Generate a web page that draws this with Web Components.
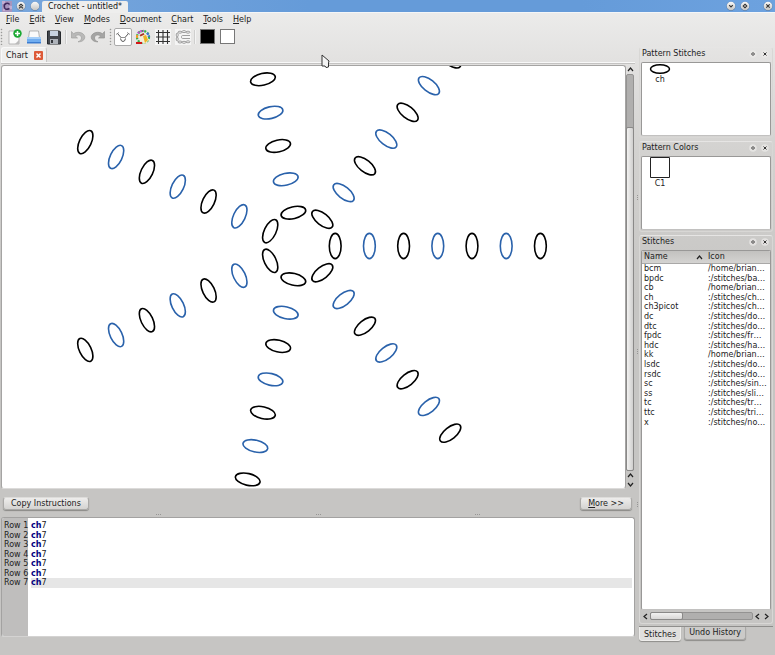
<!DOCTYPE html>
<html lang="en">
<head>
<meta charset="utf-8">
<title>Crochet - untitled*</title>
<style>
html,body{height:100%;margin:0}
body{font:8px/10px "DejaVu Sans","Liberation Sans",sans-serif;color:#222;overflow:hidden}
</style>
</head>
<body>
<crochet-app></crochet-app>
<script>
const BASE = `*{box-sizing:border-box}
button{font:inherit;color:inherit;background:none;border:0;padding:0;margin:0;display:block;white-space:nowrap}
svg{display:block}`;

class Base extends HTMLElement {
  connectedCallback() {
    if (this.shadowRoot) return;
    this.attachShadow({mode: 'open'}).innerHTML = `<style>${BASE}${this.css()}</style>${this.html()}`;
  }
  css() { return ''; }
  html() { return ''; }
}

/* Round window button with a small glyph */
customElements.define('round-button', class extends Base {
  css() { return `:host{display:block}
    button{width:10px;height:10px}`; }
  html() {
    const glyphs = {
      shade: '<path d="M3 5l2-1.800 2 1.800M3 7.400l2-1.800 2 1.800"/>',
      blank: '',
      min: '<path d="M3.200 4.200L5 6l1.800-1.800"/>',
      max: '<path d="M5 3.200L6.800 5 5 6.800 3.200 5z"/>',
      close: '<path d="M3.300 3.300l3.400 3.400M6.700 3.300L3.300 6.700"/>'
    };
    return `<button type="button" aria-label="${this.getAttribute('label')}">
      <svg width="10" height="10" viewBox="0 0 10 10"><defs><linearGradient id="g" x2="0" y2="1"><stop stop-color="#fafafa"/><stop offset="1" stop-color="#c4c3c1"/></linearGradient></defs>
      <circle cx="5" cy="5.300" r="4.600" fill="#3a5a80" opacity=".55"/><circle cx="5" cy="5" r="4.300" fill="url(#g)"/>
      <g fill="none" stroke="#333" stroke-width="1.100">${glyphs[this.getAttribute('glyph')]}</g></svg></button>`;
  }
});

customElements.define('title-bar', class extends Base {
  css() { return `:host{display:flex;height:13px;background:linear-gradient(90deg,#79a7dc,#659bd9 40%,#659bd9 75%,#6da2df);border-bottom:1px solid #f4f6f8;align-items:center;gap:4px;padding:0 2px}
    .name{align-self:flex-end;height:12px;margin:0 0 -1px -2px;background:#eeeeed;border-radius:2px 2px 0 0;padding:1px 6px 0;color:#111}
    .fill{flex:1}.gap{width:5px}`; }
  html() { return `<svg width="10" height="11" viewBox="0 0 10 11"><rect width="10" height="11" fill="#a795be"/><path d="M0 0h3v3H0zM7 5h3v3H7zM1 8h2v2H1z" fill="#c3aed2"/><path d="M7.500 3.500Q6.500 1.500 4 2.500T2.500 6.500Q3 9.500 7.500 7.500" fill="none" stroke="#40285c" stroke-width="1.500"/></svg>
    <round-button glyph="shade" label="Shade"></round-button><round-button glyph="blank" label="On all desktops"></round-button>
    <div class="name">Crochet - untitled*</div><span class="fill"></span>
    <round-button glyph="min" label="Minimize"></round-button><round-button glyph="max" label="Maximize"></round-button><span class="gap"></span><round-button glyph="close" label="Close"></round-button>`; }
});

customElements.define('menu-bar', class extends Base {
  css() { return `:host{display:block}nav{display:flex;gap:10px;padding:2px 6px;height:14px}u{text-underline-offset:1px}`; }
  html() {
    return `<nav aria-label="Main menu">${['File','Edit','View','Modes','Document','Chart','Tools','Help']
      .map(m => `<button type="button"><u>${m[0]}</u>${m.slice(1)}</button>`).join('')}</nav>`;
  }
});

customElements.define('tool-bar', class extends Base {
  css() { return `:host{display:flex;align-items:center;height:19px;gap:2px}
    button{width:18px;height:18px;display:grid;place-items:center}
    .on{background:#fff;border:1px solid #aaa;border-radius:2px}
    .grip{width:3px;height:17px;background:radial-gradient(circle,#9a9a99 35%,transparent 50%) 0 0/3px 3px}
    .sep{width:2px;height:14px;background:#cfcfce;border-right:1px solid #f4f4f4}
    .sw{width:15px;height:15px;border:1px solid #777}`; }
  html() {
    const b = (label, art, cls = '') => `<button type="button" class="${cls}" aria-label="${label}"><svg width="16" height="16" viewBox="0 0 16 16" fill="none">${art}</svg></button>`;
    const undo = 'M1.500 2.500v6.500h6L5.300 7C8 5 11.500 6 11.500 9c0 2-1.500 3-3.500 3.800C12 13 14.800 11 14.800 7.800 14 3.500 7.500 1.800 3.500 4.800z';
    return `<span class="grip"></span>
    ${b('New', '<path d="M3 2h8l2 2v11H3z" fill="#fbfbfb" stroke="#aaa" stroke-width=".8"/><path d="M9 15l4-4v4z" fill="#bbb"/><circle cx="11.500" cy="4.500" r="4.200" fill="#1aa832"/><path d="M11.500 2v5M9 4.500h5" stroke="#fff" stroke-width="1.500"/>')}
    ${b('Open', '<path d="M3.500 2h9l1 7h-11z" fill="#fafafa" stroke="#999" stroke-width=".7"/><path d="M1 8h14v6H1z" fill="#70adf0"/><path d="M1 8h14v2H1z" fill="#a5cef8"/><path d="M1 13h14v1.500H1z" fill="#3c7cd0"/>')}
    ${b('Save', '<path d="M1.500 2h12l1 1v12h-13z" fill="#44484e" stroke="#25282c"/><path d="M4 2h8v5H4z" fill="#c8d4e2"/><path d="M4 10h8v5H4z" fill="#aeb3ba"/><path d="M5 11h2v3H5z" fill="#33373c"/>')}
    <span class="sep"></span>
    ${b('Undo', `<path d="${undo}" fill="#b9b9b8" stroke="#a0a09f" stroke-width=".7"/>`)}
    ${b('Redo', `<path transform="matrix(-1 0 0 1 16 0)" d="${undo}" fill="#a5a5a4" stroke="#929291" stroke-width=".7"/>`)}
    <span class="grip"></span>
    ${b('Stitch mode', '<path d="M2.500 4.500L6 8.500M13.500 4.500L10 8.500" stroke="#555"/><path d="M1 5.500l3-2M15 5.500l-3-2" stroke="#777" stroke-width=".8"/><path d="M5.500 8.500h5" stroke="#777" stroke-width=".8"/><path d="M5.500 9.500Q6 12.500 8 12.500T10.500 9.500" stroke="#555"/>', 'on')}
    ${b('Color mode', '<circle cx="8" cy="8" r="6" stroke="#34b24a" stroke-width="2.200" stroke-dasharray="2 1.200"/><path d="M3 4.500Q5 1.500 9 2" stroke="#b750c8" stroke-width="2.200" stroke-dasharray="2 1"/><path d="M12 4q2 2 2 4" stroke="#4070d8" stroke-width="2.200" stroke-dasharray="2 1"/><path d="M2 9v-3" stroke="#f09a28" stroke-width="2"/><path d="M4 7l6-3 4 7-4 4-5-3z" fill="#f4edd6"/><path d="M8 7l3-1 2 5-3 3z" fill="#edb225"/><path d="M4.500 6l4-2 1 1.500-4 2z" fill="#a93222"/><path d="M1 14h6" stroke="#d31717" stroke-width="2"/>')}
    ${b('Show grid', '<rect width="16" height="16" fill="#f5f5f5"/><path d="M3.500 1v14M8 1v14M12.500 1v14M1 3.500h14M1 8h14M1 12.500h14" stroke="#333" stroke-width="1.100"/>')}
    ${b('Edit rows', '<rect width="16" height="16" fill="#f5f5f5"/><g stroke="#888" stroke-width=".8"><ellipse cx="5" cy="3.200" rx="2" ry="1"/><ellipse cx="9" cy="2.600" rx="2" ry="1"/><ellipse cx="13" cy="3.200" rx="2" ry="1"/><ellipse cx="2.200" cy="6" rx="1" ry="2"/><ellipse cx="2.200" cy="10" rx="1" ry="2"/><ellipse cx="5" cy="13" rx="2" ry="1"/><ellipse cx="9" cy="13.300" rx="2" ry="1"/><ellipse cx="13" cy="12.800" rx="2" ry="1"/><path d="M6 7.800Q7 6 9 6.500h6M6 8.200Q7 10 9 9.500h6"/></g>')}
    <span class="sep"></span>
    <button type="button" aria-label="Foreground color"><span class="sw" style="background:#000"></span></button>
    <button type="button" aria-label="Background color"><span class="sw" style="background:#fff"></span></button>`;
  }
});

/* Scroll bar: orient = v | h */
customElements.define('scroll-bar', class extends Base {
  css() { return `:host{display:flex;width:9px;flex-direction:column;padding:0}
    :host([orient=h]){width:auto;height:12px;flex-direction:row;padding:1px 0}
    button{width:9px;height:9px;display:grid;place-items:center;flex:none}
    .track{flex:1;display:flex;justify-content:flex-end;flex-direction:column;background:#b0afae;border:1px solid #949392;border-radius:2px;margin:0 1px 0 0}
    :host([orient=h]) .track{flex-direction:row;justify-content:flex-start;margin:1px 0;height:8px;align-self:center}
    .thumb{background:linear-gradient(90deg,#f2f2f1,#d0cfce);border:1px solid #8a8988;border-radius:2px;margin:-1px;height:87%}
    :host([orient=h]) .thumb{background:linear-gradient(#f2f2f1,#d8d7d6);height:auto;width:33%}
    :host([orient=h]) button{height:10px}`; }
  html() {
    const v = this.getAttribute('orient') !== 'h';
    const d = {up:'M1 5l2.500-3L6 5', down:'M1 2l2.500 3L6 2', left:'M5 1L2 3.500 5 6', right:'M2 1l3 2.500L2 6'};
    const b = k => `<button type="button" aria-label="Scroll ${k}"><svg width="7" height="7" fill="none" stroke="#222" stroke-width="1.200"><path d="${d[k]}"/></svg></button>`;
    return v ? `${b('up')}<div class="track"><div class="thumb"></div></div>${b('up')}${b('down')}`
             : `${b('left')}<div class="track"><div class="thumb"></div></div>${b('left')}${b('right')}`;
  }
});

/* Seven radial rows of seven chain stitches */
customElements.define('stitch-chart', class extends Base {
  css() { return `:host{display:block;background:#fff;border:1px solid #a5a4a3;border-bottom-color:#dcdbda;border-radius:3px;overflow:hidden;min-height:0}svg{width:100%;height:100%}`; }
  html() {
    let s = '';
    for (let arm = 0; arm < 7; arm++)
      for (let k = 1; k < 8; k++)
        s += `<ellipse cx="${(34.2 * k).toFixed(1)}" rx="5.900" ry="12.600" transform="rotate(${(arm * 360 / 7).toFixed(2)})" stroke="${k % 2 ? '#000' : '#2a62ab'}"/>`;
    return `<svg role="img" aria-label="Crochet chart"><g transform="translate(299 180)" fill="none" stroke-width="1.600">${s}</g></svg>`;
  }
});

customElements.define('push-button', class extends Base {
  css() { return `:host{display:block}button{height:13px;padding:0 7px;border-radius:3px;background:linear-gradient(#eeedec,#d4d3d1);border:1px solid #aaa9a7;border-top-color:#dddcda;box-shadow:0 1px 1px #8a8987;line-height:10px}`; }
  html() { return `<button type="button"><slot></slot></button>`; }
});

customElements.define('row-editor', class extends Base {
  css() { return `:host{display:grid;grid-template-columns:26px 1fr;height:120px;background:#fff;border:1px solid #a3a2a1;border-bottom-color:#d4d3d2;border-radius:3px;overflow:hidden}
    .rows{display:grid;grid-template-rows:repeat(7,minmax(0,1fr));height:67px;margin-top:3px}
    .rows>div{line-height:9px}
    .num{background:#bfbebd;white-space:nowrap}.num .rows>div{padding-left:2px}
    .text{outline:0;padding:0 2px 0 3px}.text b{color:#00007f}.text .cur{background:#e6e6e6}`; }
  html() {
    const n = [1,2,3,4,5,6,7];
    return `<div class="num"><div class="rows">${n.map(i => `<div>Row ${i}</div>`).join('')}</div></div>
      <div class="rows text" role="textbox" aria-multiline="true" aria-label="Row instructions" contenteditable="true" spellcheck="false">${n.map(i => `<div class="${i === 7 ? 'cur' : ''}"><b>ch</b>7</div>`).join('')}</div>`;
  }
});

customElements.define('dock-panel', class extends Base {
  css() { return `:host{display:flex;flex-direction:column;border:1px solid #d8d7d5;border-top-color:#e6e5e4;border-radius:3px;padding:0 1px 1px}
    header{display:flex;align-items:center;height:14px;padding:0 1px 2px;gap:2px}
    h2{font:inherit;margin:0;flex:1}
    .body{flex:1;display:flex;flex-direction:column;background:#fff;border:1px solid #999897;border-bottom-color:#c2c1c0;border-radius:2px;overflow:hidden}`; }
  html() {
    const b = (l, p) => `<button type="button" aria-label="${l}"><svg width="10" height="10" viewBox="0 0 10 10"><circle cx="5" cy="5" r="3.800" fill="#ecebea" opacity=".7"/><path d="${p}" fill="none" stroke="#333"/></svg></button>`;
    return `<header><h2>${this.getAttribute('heading')}</h2>${b('Float', 'M5 3.500L6.500 5 5 6.500 3.500 5z')}${b('Close', 'M3.500 3.500l3 3M6.500 3.500l-3 3')}</header>
      <div class="body"><slot></slot></div><slot name="foot"></slot>`;
  }
});

customElements.define('icon-item', class extends Base {
  css() { return `:host{display:flex;flex-direction:column;align-items:center;width:36px}`; }
  html() { return `<slot name="art"></slot><slot></slot>`; }
});

customElements.define('stitch-table', class extends Base {
  css() { return `:host{display:block}
    table{width:100%;border-collapse:collapse;table-layout:fixed}
    th{height:12px;font-weight:400;text-align:left;padding:1px 2px 0;line-height:10px;background:linear-gradient(#c2c1bf,#d4d3d1);border-bottom:1px solid #a9a8a7}
    th:first-child{width:63px}
    th div{display:flex;align-items:center;justify-content:space-between}
    td{padding:0 2px;white-space:nowrap;overflow:hidden;line-height:10px;height:10px}
    tr:nth-child(5n+2) td,tr:nth-child(5n+4) td{line-height:9px;height:9px}
    th+th,td+td{padding-left:3px}`; }
  html() {
    const rows = [['bcm','/home/brian…'],['bpdc',':/stitches/ba…'],['cb','/home/brian…'],['ch',':/stitches/ch…'],['ch3picot',':/stitches/ch…'],['dc',':/stitches/do…'],['dtc',':/stitches/do…'],['fpdc',':/stitches/fr…'],['hdc',':/stitches/ha…'],['kk','/home/brian…'],['lsdc',':/stitches/do…'],['rsdc',':/stitches/do…'],['sc',':/stitches/sin…'],['ss',':/stitches/sli…'],['tc',':/stitches/tr…'],['ttc',':/stitches/tri…'],['x',':/stitches/no…']];
    return `<table><thead><tr><th scope="col" aria-sort="ascending"><div>Name<svg width="7" height="7" fill="none" stroke="#222" stroke-width="1.200"><path d="M1 5l2.500-3L6 5"/></svg></div></th><th scope="col">Icon</th></tr></thead>
      <tbody>${rows.map(r => `<tr><td>${r[0]}</td><td>${r[1]}</td></tr>`).join('')}</tbody></table>`;
  }
});

customElements.define('bottom-tabs', class extends Base {
  css() { return `:host{display:flex;align-items:flex-start;gap:3px;border-top:1px solid #8f8e8c;margin-top:2px}
    button{padding:0 4px;height:13px;background:#cbcac8;border:1px solid #aaa9a7;border-top:0;border-radius:0 0 3px 3px;box-shadow:0 1px 1px #8d8c8a}
    [aria-selected=true]{height:14px;padding-top:2px;background:#e0dfdd;border-color:#eeedeb}`; }
  html() { return `<button type="button" role="tab" aria-selected="true">Stitches</button><button type="button" role="tab" aria-selected="false">Undo History</button>`; }
});

customElements.define('crochet-app', class extends Base {
  css() { return `:host{display:flex;flex-direction:column;height:100vh;position:relative;background:linear-gradient(#eeeeed,#e2e1e0 62px,#d3d2d0 150px,#c6c5c3 300px)}
    .work{flex:1;min-height:0;display:grid;grid-template-columns:minmax(0,1fr) 4px 136px}
    .left{display:flex;flex-direction:column;min-height:0;padding-left:1px}
    .tabs{display:flex;height:16px;border-bottom:1px solid #f8f8f8;box-shadow:0 1px #c4c3c2;margin-bottom:2px}
    .tab{display:flex;align-items:center;gap:6px;padding:1px 3px 0 4px;background:#efefee;border:1px solid #f9f9f9;border-right-color:#c8c7c6;border-bottom:0;border-radius:3px 3px 0 0}
    .x{width:9px;height:9px}
    .view{flex:1;min-height:0;display:grid;grid-template-columns:1fr 9px}
    .actions{display:flex;justify-content:space-between;padding:8px 3px 0 2px;height:23px}
    .grips{display:flex;justify-content:space-evenly;height:5px;align-items:center}
    i{width:5px;height:1px;background:repeating-linear-gradient(90deg,#979695 0 1px,transparent 1px 2px)}
    .split{display:flex;flex-direction:column;justify-content:space-evenly;align-items:center}
    .split i{width:1px;height:5px;background:repeating-linear-gradient(#979695 0 1px,transparent 1px 2px)}
    row-editor{margin-bottom:18px}
    .docks{display:flex;flex-direction:column;gap:3px;padding:0 2px 14px 0;min-height:0}
    .docks>dock-panel{height:91px}
    .last{flex:1;min-height:0;display:flex;flex-direction:column}
    .last dock-panel{flex:1;min-height:0}
    .bars{display:flex;height:34px;flex-direction:column}
    .cursor{position:absolute;left:321px;top:54px;pointer-events:none}`; }
  html() {
    return `<title-bar></title-bar>
    <div class="bars"><menu-bar></menu-bar><tool-bar></tool-bar></div>
    <div class="work">
      <div class="left">
        <div class="tabs"><div class="tab"><button type="button" role="tab" aria-selected="true">Chart</button><button type="button" class="x" aria-label="Close chart"><svg width="9" height="9"><rect width="9" height="9" rx="1" fill="#dd5a38"/><path d="M2.500 2.500l4 4M6.500 2.500l-4 4" stroke="#fff" stroke-width="1.500"/></svg></button></div></div>
        <div class="view"><stitch-chart></stitch-chart><scroll-bar orient="v"></scroll-bar></div>
        <div class="actions"><push-button>Copy Instructions</push-button><push-button><u>M</u>ore &gt;&gt;</push-button></div>
        <div class="grips"><i></i><i></i><i></i></div>
        <row-editor></row-editor>
      </div>
      <div class="split"><i></i><i></i><i></i></div>
      <div class="docks">
        <dock-panel heading="Pattern Stitches"><icon-item><svg slot="art" width="24" height="12"><ellipse cx="12" cy="6" rx="9.500" ry="4.300" fill="none" stroke="#000" stroke-width="1.500"/></svg>ch</icon-item></dock-panel>
        <dock-panel heading="Pattern Colors"><icon-item><svg slot="art" width="20" height="22"><path d="M.500.500v20h19V.500z" fill="#fff" stroke="#222"/></svg>C1</icon-item></dock-panel>
        <div class="last">
          <dock-panel heading="Stitches"><stitch-table></stitch-table><scroll-bar slot="foot" orient="h"></scroll-bar></dock-panel>
          <bottom-tabs></bottom-tabs>
        </div>
      </div>
    </div>
    <svg class="cursor" width="9" height="15"><path d="M1 1v11h3l1 1.500 2.500-.500V9L8 7z" fill="#f4f4f4" stroke="#333"/></svg>`;
  }
});
</script>
</body>
</html>
